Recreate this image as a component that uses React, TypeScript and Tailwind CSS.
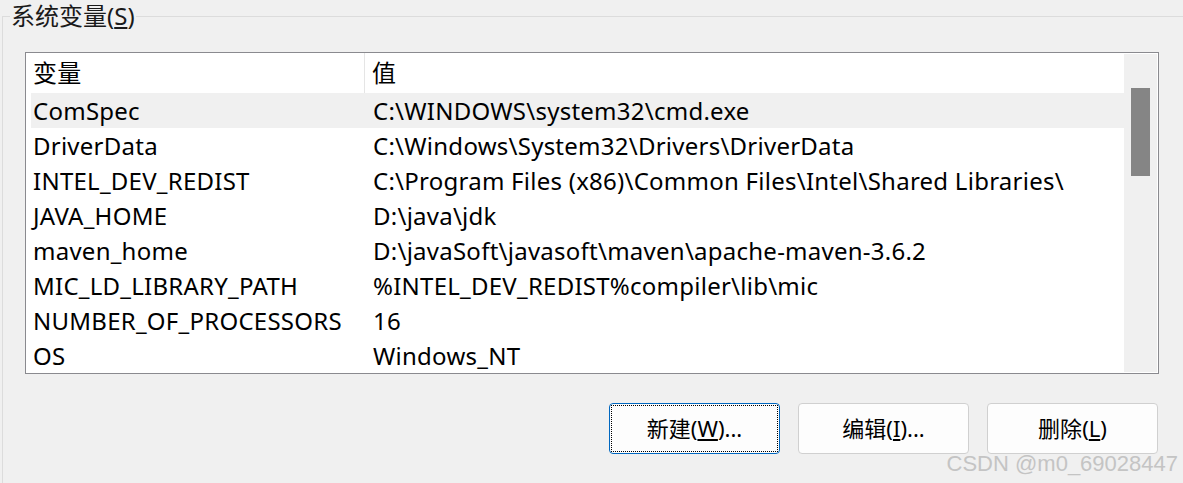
import React from 'react';

const rows: [string, string][] = [
  ['ComSpec', 'C:\\WINDOWS\\system32\\cmd.exe'],
  ['DriverData', 'C:\\Windows\\System32\\Drivers\\DriverData'],
  ['INTEL_DEV_REDIST', 'C:\\Program Files (x86)\\Common Files\\Intel\\Shared Libraries\\'],
  ['JAVA_HOME', 'D:\\java\\jdk'],
  ['maven_home', 'D:\\javaSoft\\javasoft\\maven\\apache-maven-3.6.2'],
  ['MIC_LD_LIBRARY_PATH', '%INTEL_DEV_REDIST%compiler\\lib\\mic'],
  ['NUMBER_OF_PROCESSORS', '16'],
  ['OS', 'Windows_NT'],
];

const font = { fontFamily: '"Noto Sans", "Noto Sans CJK SC", sans-serif' };

function Button({ label, hotkey, suffix, focused }: { label: string; hotkey: string; suffix: string; focused?: boolean }) {
  return (
    <button
      className={
        focused
          ? 'relative w-[171px] h-[51px] rounded-[4px] border border-[#0067c0] bg-[#fdfdfd] text-[22px] text-black'
          : 'relative w-[171px] h-[51px] rounded-[4px] border border-[#d0d0d0] bg-[#fdfdfd] text-[22px] text-black'
      }
    >
      {focused && <span className="absolute inset-[1px] border border-dotted border-black" />}
      {label}(<span className="underline underline-offset-2">{hotkey}</span>){suffix}
    </button>
  );
}

export default function App() {
  return (
    <div className="relative w-[1183px] h-[483px] overflow-hidden bg-[#f0f0f0] text-black" style={font}>
      <fieldset className="ml-[2px] mt-[2px] border-0 border-t border-l border-[#dcdcdc] pb-[60px]">
        <legend className="ml-[7px] px-[1px] text-[24px] leading-[28px] text-[#1a1a1a]">
          系统变量(<span className="underline underline-offset-2">S</span>)
        </legend>

        <div className="pl-[22px] pr-[24px]">
          <div className="mt-[22px] flex h-[322px] border border-[#8a8a8f] bg-white">
            <div className="flex-1 overflow-hidden text-[24px] tracking-[0.25px]">
              <div className="flex h-[40px] items-center">
                <div className="flex h-full w-[339px] items-center border-r border-[#e5e5e5] pl-[7px]">变量</div>
                <div className="pl-[7px]">值</div>
              </div>
              {rows.map(([name, value], i) => (
                <div
                  key={name}
                  className={
                    i === 0
                      ? 'ml-[5px] flex h-[35px] items-center bg-[#f0f0f0] whitespace-nowrap'
                      : 'ml-[5px] flex h-[35px] items-center whitespace-nowrap'
                  }
                >
                  <div className="w-[342px] shrink-0 pl-[2px]">{name}</div>
                  <div>{value}</div>
                </div>
              ))}
            </div>
            <div className="my-[1px] mr-[1px] w-[33px] bg-[#f0f0f0] pt-[34px] pl-[7px]">
              <div className="h-[88px] w-[19px] bg-[#858585]" />
            </div>
          </div>

          <div className="mt-[29px] flex justify-end gap-[18px] pr-[1px]">
            <Button label="新建" hotkey="W" suffix="..." focused />
            <Button label="编辑" hotkey="I" suffix="..." />
            <Button label="删除" hotkey="L" suffix="" />
          </div>
        </div>
      </fieldset>

      <div
        className="absolute right-[5px] bottom-[8px] text-[22px] leading-none text-[#c4c4c4]"
        style={{ fontFamily: '"Liberation Sans", Arial, sans-serif' }}
      >
        CSDN @m0_69028447
      </div>
    </div>
  );
}
